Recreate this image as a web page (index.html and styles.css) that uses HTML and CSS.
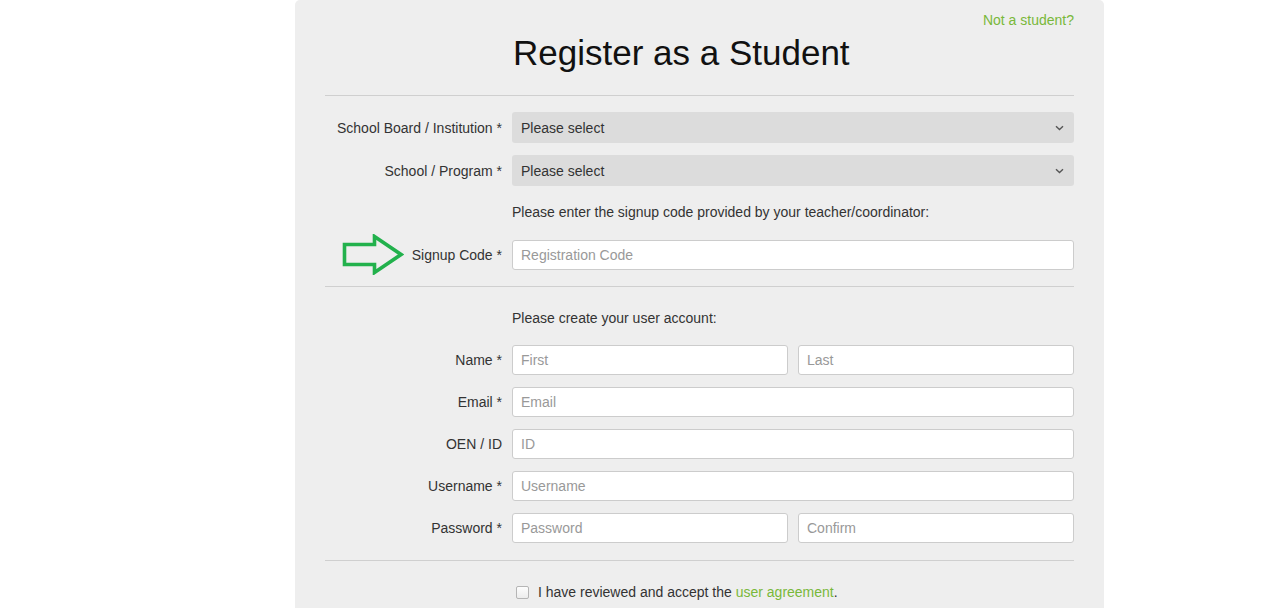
FILE: index.html
```html
<!DOCTYPE html>
<html>
<head>
<meta charset="utf-8">
<link rel="stylesheet" href="styles.css">
</head>
<body>
<div class="panel">
  <div class="toplink"><a href="#">Not a student?</a></div>
  <h1 class="title">Register as a Student</h1>
  <hr class="rule rule-first">
  <div class="row row-select">
    <label class="label">School Board / Institution *</label>
    <div class="field select-wrap">
      <select class="select"><option>Please select</option></select>
      <svg class="chev" width="9" height="6" viewBox="0 0 9 6"><path d="M1 1.2 L4.5 4.5 L8 1.2" fill="none" stroke="#555" stroke-width="1.4"/></svg>
    </div>
  </div>
  <div class="row row-select">
    <label class="label">School / Program *</label>
    <div class="field select-wrap">
      <select class="select"><option>Please select</option></select>
      <svg class="chev" width="9" height="6" viewBox="0 0 9 6"><path d="M1 1.2 L4.5 4.5 L8 1.2" fill="none" stroke="#555" stroke-width="1.4"/></svg>
    </div>
  </div>
  <div class="row row-note note-1">
    <div class="label"></div>
    <div class="field note">Please enter the signup code provided by your teacher/coordinator:</div>
  </div>
  <div class="row row-code">
    <label class="label label-arrow">
      <svg class="arrow" width="62" height="41" viewBox="0 0 62 41"><path d="M2.5 10.5 H32.5 V2.5 L59 20.5 L32.5 38.5 V30.5 H2.5 Z" fill="none" stroke="#22b14c" stroke-width="3.6" stroke-linejoin="miter"/></svg>
      <span>Signup Code *</span>
    </label>
    <div class="field"><input class="input" placeholder="Registration Code"></div>
  </div>
  <hr class="rule rule-mid">
  <div class="row row-note note-2">
    <div class="label"></div>
    <div class="field note">Please create your user account:</div>
  </div>
  <div class="row">
    <label class="label">Name *</label>
    <div class="field split"><input class="input" placeholder="First"><input class="input" placeholder="Last"></div>
  </div>
  <div class="row">
    <label class="label">Email *</label>
    <div class="field"><input class="input" placeholder="Email"></div>
  </div>
  <div class="row">
    <label class="label">OEN / ID</label>
    <div class="field"><input class="input" placeholder="ID"></div>
  </div>
  <div class="row">
    <label class="label">Username *</label>
    <div class="field"><input class="input" placeholder="Username"></div>
  </div>
  <div class="row">
    <label class="label">Password *</label>
    <div class="field split"><input class="input" placeholder="Password"><input class="input" placeholder="Confirm"></div>
  </div>
  <hr class="rule rule-last">
  <div class="row row-check">
    <div class="label"></div>
    <div class="field check"><span class="box"></span><span>I have reviewed and accept the <a href="#">user agreement</a>.</span></div>
  </div>
</div>
</body>
</html>
```

FILE: styles.css
```css
html, body {
  margin: 0;
  padding: 0;
  background: #ffffff;
  font-family: "Liberation Sans", Arial, sans-serif;
  font-size: 14px;
  color: #333;
  overflow: hidden;
}

a {
  color: #79b83a;
  text-decoration: none;
}

.panel {
  margin-left: 295px;
  width: 809px;
  box-sizing: border-box;
  height: 608px;
  background: #eeeeee;
  border-radius: 5px 5px 0 0;
  padding: 10px 30px 0 30px;
}

.toplink {
  text-align: right;
  line-height: 20px;
  height: 20px;
}

.title {
  margin: 3px 0 0 188px;
  font-size: 35px;
  font-weight: normal;
  line-height: 40px;
  color: #111;
}

.rule {
  border: 0;
  border-top: 1px solid #cfcfcf;
  margin: 0;
  height: 0;
}

.rule-first { margin-top: 22px; margin-bottom: 16px; }
.rule-mid { margin-top: 11px; margin-bottom: 21px; }
.rule-last { margin-top: 17px; margin-bottom: 21px; }

.row {
  display: flex;
  align-items: center;
  gap: 10px;
  margin-bottom: 12px;
}

.label {
  width: 177px;
  flex: none;
  text-align: right;
  color: #333;
  line-height: 20px;
}

.label-arrow {
  display: flex;
  align-items: center;
  justify-content: flex-end;
  gap: 8px;
}

.arrow { display: block; }

.field {
  width: 562px;
  flex: none;
}

.select-wrap { position: relative; }

.select {
  -webkit-appearance: none;
  appearance: none;
  display: block;
  width: 100%;
  height: 31px;
  border: 0;
  border-radius: 3px;
  background: #dcdcdc;
  font-family: inherit;
  font-size: 14px;
  color: #333;
  padding: 0 9px;
  margin: 0;
}

.chev {
  position: absolute;
  right: 10px;
  top: 13px;
}

.note {
  line-height: 20px;
  color: #333;
}

.note-1 { margin-top: 16px; margin-bottom: 12px; }
.note-2 { margin-bottom: 17px; }

.input {
  display: block;
  box-sizing: border-box;
  width: 100%;
  height: 30px;
  border: 1px solid #cccccc;
  border-radius: 3px;
  background: #fff;
  font-family: inherit;
  font-size: 14px;
  padding: 0 8px;
  margin: 0;
  color: #333;
}

.input::placeholder { color: #999; }

.split {
  display: flex;
  gap: 10px;
}

.split .input { flex: 1; width: auto; min-width: 0; }

.row-code { margin-bottom: 0; }

.check {
  display: flex;
  align-items: center;
  line-height: 20px;
}

.box {
  width: 11px;
  height: 11px;
  border: 1px solid #b5b5b5;
  border-radius: 2px;
  background: linear-gradient(#fdfdfd, #ececec);
  margin: 0 9px 0 4px;
  flex: none;
}
```
